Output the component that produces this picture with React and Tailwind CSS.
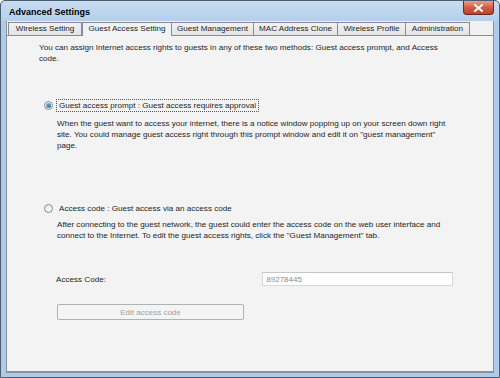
export default function App() {
  const tabs = [
    { label: 'Wireless Setting', w: 'w-[74px]' },
    { label: 'Guest Access Setting', w: 'w-[90px]', active: true },
    { label: 'Guest Management', w: 'w-[83px]' },
    { label: 'MAC Address Clone', w: 'w-[85px]' },
    { label: 'Wireless Profile', w: 'w-[69px]' },
    { label: 'Administration', w: 'w-[65px]' },
  ];

  return (
    <div
      className="w-[500px] h-[378px] flex flex-col bg-[#adcbea] border border-[#4d5d6e] rounded-t-[5px] text-[8.1px] text-[#1e1e1e]"
      style={{ fontFamily: '"Liberation Sans", Arial, sans-serif' }}
    >
      {/* title bar */}
      <div className="h-[20px] flex items-start justify-between bg-gradient-to-b from-[#c9dcf1] to-[#b4cfeb] rounded-t-[5px]">
        <div className="pl-[8px] pt-[7px] text-[9px] font-bold text-black leading-none">Advanced Settings</div>
        <button className="mr-[5px] w-[31px] h-[14px] flex items-center justify-center rounded-b-[4px] border border-t-0 border-[#6b2a1f] bg-gradient-to-b from-[#e5a08f] via-[#cf5d45] to-[#c0412b]">
          <svg width="9" height="8" viewBox="0 0 9 8">
            <path d="M1 1 L8 7 M8 1 L1 7" stroke="#fff" strokeWidth="2" strokeLinecap="square" />
          </svg>
        </button>
      </div>

      {/* client area */}
      <div className="flex-1 mx-[5px] mb-[4px] flex flex-col bg-[#f0f0f0] border-x border-b-2 border-[#8f9398]">
        <div className="h-[14px] flex items-end pl-[1px]">
          {tabs.map(t =>
            t.active ? (
              <div
                key={t.label}
                className={`${t.w} h-[14px] -mb-px relative z-10 flex items-center justify-center border border-b-0 border-[#898c95] bg-gradient-to-b from-[#eaf3fc] to-[#f3f3f3] whitespace-nowrap`}
              >
                {t.label}
              </div>
            ) : (
              <div
                key={t.label}
                className={`${t.w} h-[13px] -ml-px first:ml-0 flex items-center justify-center border border-b-0 border-[#898c95] bg-gradient-to-b from-[#f2f2f2] to-[#e3e3e3] whitespace-nowrap`}
              >
                {t.label}
              </div>
            )
          )}
        </div>

        <div className="flex-1 bg-[#f3f3f3] border-t border-[#898c95] pl-[32px] pr-[40px] pt-[6px] leading-[11px]">
          <p className="w-[404px]">
            You can assign Internet access rights to guests in any of these two methods: Guest access prompt, and Access code.
          </p>

          <div className="mt-[35px] ml-[5px] flex items-center gap-[3px]">
            <span className="w-[9px] h-[9px] rounded-full border border-[#8a8a8a] bg-[#f5f5f5] flex items-center justify-center">
              <span className="w-[5px] h-[5px] rounded-full bg-gradient-to-br from-[#7ec2f2] to-[#1c5fb0]" />
            </span>
            <span className="px-[2px] border border-dotted border-[#555]">Guest access prompt : Guest access requires approval</span>
          </div>

          <p className="mt-[6px] ml-[18px] w-[398px]">
            When the guest want to access your internet, there is a notice window popping up on your screen down right site. You could manage guest access right through this prompt window and edit it on "guest management" page.
          </p>

          <div className="mt-[52px] ml-[5px] flex items-center gap-[3px]">
            <span className="w-[9px] h-[9px] rounded-full border border-[#8a8a8a] bg-gradient-to-br from-[#e6e6e6] to-[#fafafa]" />
            <span className="px-[3px]">Access code : Guest access via an access code</span>
          </div>

          <p className="mt-[5px] ml-[18px] w-[398px]">
            After connecting to the guest network, the guest could enter the access code on the web user interface and connect to the Internet. To edit the guest access rights, click the "Guest Management" tab.
          </p>

          <div className="mt-[31px] ml-[17px] flex items-center">
            <span className="w-[210px]">Access Code:</span>
            <input
              readOnly
              value="89278445"
              className="w-[194px] h-[14px] px-[3px] bg-white border border-[#d5d8dc] border-t-[#c3c6ca] text-[8px] text-[#8c8c8c] outline-none"
            />
          </div>

          <button
            disabled
            className="mt-[18px] ml-[18px] w-[187px] h-[16px] flex items-center justify-center rounded-[2px] border border-[#adb2b5] bg-[#f4f4f4] text-[#a0a0a0] text-[8px]"
          >
            Edit access code
          </button>
        </div>
      </div>
    </div>
  );
}
